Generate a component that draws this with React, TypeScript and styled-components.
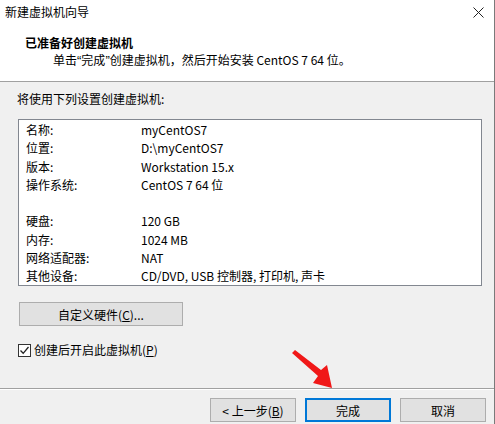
import React from "react";
import styled, { createGlobalStyle } from "styled-components";

const GlobalStyle = createGlobalStyle`
  html, body {
    margin: 0;
    padding: 0;
    background: #f0f0f0;
  }
  body {
    font-family: "Noto Sans CJK SC", "Noto Sans", sans-serif;
    font-size: 12px;
    color: #000;
  }
`;

const Window = styled.div`
  position: relative;
  width: 494px;
  height: 424px;
  border-right: 1px solid #7a7a7a;
  background: #f0f0f0;
  display: flex;
  flex-direction: column;
  overflow: hidden;
`;

const TitleBar = styled.div`
  height: 24px;
  padding: 0 10px 0 5px;
  background: #fff;
  display: flex;
  align-items: center;
  justify-content: space-between;
  line-height: 24px;
`;

const Header = styled.div`
  height: 58px;
  background: #fff;
  border-bottom: 1px solid #a0a0a0;
  padding: 10px 0 0 25px;
  box-sizing: border-box;
  display: flex;
  flex-direction: column;
`;

const HeaderTitle = styled.div`
  font-weight: bold;
  line-height: 18px;
`;

const HeaderText = styled.div`
  padding-left: 28px;
  line-height: 16px;
`;

// narrow quote marks, as the system UI font draws them
const Quote = styled.span`
  font-family: "Liberation Sans", sans-serif;
  font-size: 13px;
`;

const Body = styled.div`
  flex: 1;
  padding: 9px 12px 0 18px;
  display: flex;
  flex-direction: column;
`;

const Caption = styled.div`
  line-height: 16px;
  margin-left: -1px;
`;

const ListBox = styled.div`
  margin-top: 12px;
  height: 167px;
  box-sizing: border-box;
  border: 1px solid #828790;
  background: #fff;
  padding: 1px 0 0 7px;
`;

const Row = styled.div<{ $gap?: boolean }>`
  display: grid;
  grid-template-columns: 115px 1fr;
  height: 18.3px;
  line-height: 18px;
  margin-top: ${(p) => (p.$gap ? "18.3px" : "0")};
`;

const Button = styled.button<{ $default?: boolean; $width?: number }>`
  width: ${(p) => p.$width ?? 86}px;
  height: 24px;
  box-sizing: border-box;
  padding: 0;
  font: inherit;
  color: #000;
  background: #e1e1e1;
  border: ${(p) => (p.$default ? "2px solid #0078d7" : "1px solid #adadad")};
`;

const HardwareButton = styled(Button)`
  margin-top: 16px;
  margin-left: 1px;
`;

const CheckRow = styled.label`
  margin-top: 16px;
  display: flex;
  align-items: center;
  gap: 3px;
  line-height: 16px;
`;

const CheckBox = styled.span`
  width: 13px;
  height: 13px;
  box-sizing: border-box;
  border: 1px solid #333;
  background: #fff;
  display: flex;
  align-items: center;
  justify-content: center;
`;

const Footer = styled.div`
  height: 36px;
  border-top: 1px solid #a0a0a0;
  box-shadow: inset 0 1px 0 #fff;
  display: flex;
  justify-content: flex-end;
  align-items: flex-start;
  gap: 9px;
  padding: 9px 8px 0 0;
  box-sizing: border-box;
`;

const Arrow = styled.svg`
  position: absolute;
  left: 0;
  top: 0;
  pointer-events: none;
`;

const u = (s: string) => <u style={{ textDecoration: "underline" }}>{s}</u>;

const rows: [string, string, boolean?][] = [
  ["名称:", "myCentOS7"],
  ["位置:", "D:\\myCentOS7"],
  ["版本:", "Workstation 15.x"],
  ["操作系统:", "CentOS 7 64 位"],
  ["硬盘:", "120 GB", true],
  ["内存:", "1024 MB"],
  ["网络适配器:", "NAT"],
  ["其他设备:", "CD/DVD, USB 控制器, 打印机, 声卡"],
];

export default function App() {
  return (
    <>
      <GlobalStyle />
      <Window>
        <TitleBar>
          <span>新建虚拟机向导</span>
          <svg width="11" height="11" viewBox="0 0 11 11">
            <path d="M0.5 0.5 L10.5 10.5 M10.5 0.5 L0.5 10.5" stroke="#222" strokeWidth="1" />
          </svg>
        </TitleBar>
        <Header>
          <HeaderTitle>已准备好创建虚拟机</HeaderTitle>
          <HeaderText>
            单击<Quote>“</Quote>完成<Quote>”</Quote>创建虚拟机，然后开始安装 CentOS 7 64 位。
          </HeaderText>
        </Header>
        <Body>
          <Caption>将使用下列设置创建虚拟机:</Caption>
          <ListBox>
            {rows.map(([k, v, gap]) => (
              <Row key={k} $gap={gap}>
                <span>{k}</span>
                <span>{v}</span>
              </Row>
            ))}
          </ListBox>
          <HardwareButton $width={164}>自定义硬件({u("C")})...</HardwareButton>
          <CheckRow>
            <CheckBox>
              <svg width="11" height="11" viewBox="0 0 11 11">
                <path d="M1.5 5.5 L4.2 8.3 L9.5 2" fill="none" stroke="#222" strokeWidth="1.3" />
              </svg>
            </CheckBox>
            <span>创建后开启此虚拟机({u("P")})</span>
          </CheckRow>
        </Body>
        <Footer>
          <Button>&lt; 上一步({u("B")})</Button>
          <Button $default>完成</Button>
          <Button>取消</Button>
        </Footer>
        <Arrow width="495" height="424">
          <polygon
            points="292,353 295,350 321,370 327,365 332,388 313,383 318,376"
            fill="#f01818"
          />
        </Arrow>
      </Window>
    </>
  );
}
